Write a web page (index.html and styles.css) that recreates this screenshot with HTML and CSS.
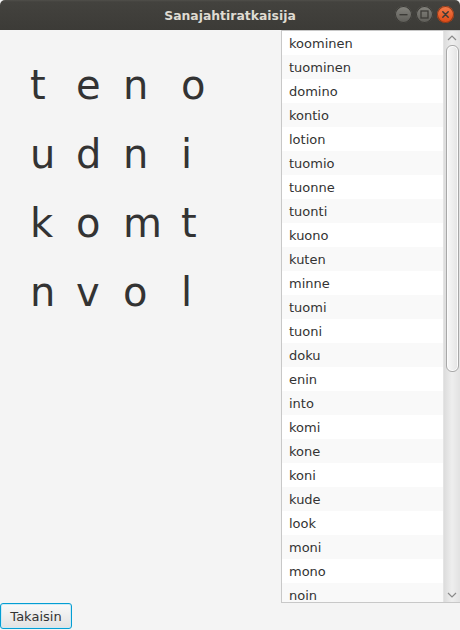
FILE: index.html
```html
<!DOCTYPE html>
<html lang="fi">
<head>
<meta charset="utf-8">
<title>Sanajahtiratkaisija</title>
<link rel="stylesheet" href="styles.css">
</head>
<body>
<div class="window">
  <header class="titlebar">
    <span class="title">Sanajahtiratkaisija</span>
    <div class="controls">
      <span class="ctl ctl-min"><svg width="17" height="17" viewBox="0 0 17 17"><rect x="4.5" y="8" width="8" height="1.4" fill="#3c3b37"/></svg></span>
      <span class="ctl ctl-max"><svg width="17" height="17" viewBox="0 0 17 17"><rect x="5" y="5" width="7" height="7" fill="none" stroke="#3c3b37" stroke-width="1.3"/></svg></span>
      <span class="ctl ctl-close"><svg width="17" height="17" viewBox="0 0 17 17"><path d="M5.8 5.8 L11.2 11.2 M11.2 5.8 L5.8 11.2" stroke="#3c3b37" stroke-width="1.5" stroke-linecap="round"/></svg></span>
    </div>
  </header>
  <main class="content">
    <section class="board">
      <span class="cell">t</span><span class="cell">e</span><span class="cell">n</span><span class="cell">o</span>
      <span class="cell">u</span><span class="cell">d</span><span class="cell">n</span><span class="cell">i</span>
      <span class="cell">k</span><span class="cell">o</span><span class="cell">m</span><span class="cell">t</span>
      <span class="cell">n</span><span class="cell">v</span><span class="cell">o</span><span class="cell">l</span>
    </section>
    <section class="listview">
      <ul class="items">
        <li>koominen</li><li>tuominen</li><li>domino</li><li>kontio</li>
        <li>lotion</li><li>tuomio</li><li>tuonne</li><li>tuonti</li>
        <li>kuono</li><li>kuten</li><li>minne</li><li>tuomi</li>
        <li>tuoni</li><li>doku</li><li>enin</li><li>into</li>
        <li>komi</li><li>kone</li><li>koni</li><li>kude</li>
        <li>look</li><li>moni</li><li>mono</li><li>noin</li>
      </ul>
      <div class="scrollbar">
        <div class="arrow"><svg width="10" height="6" viewBox="0 0 10 6"><path d="M1 5 L5 1 L9 5" fill="none" stroke="#8a8a8a" stroke-width="1.2"/></svg></div>
        <div class="track"><div class="thumb"></div></div>
        <div class="arrow"><svg width="10" height="6" viewBox="0 0 10 6"><path d="M1 1 L5 5 L9 1" fill="none" stroke="#8a8a8a" stroke-width="1.2"/></svg></div>
      </div>
    </section>
  </main>
  <footer class="bottom">
    <button class="btn" type="button">Takaisin</button>
  </footer>
</div>
</body>
</html>
```

FILE: styles.css
```css
html, body {
  margin: 0;
  padding: 0;
  background: #f4f4f4;
}
.window {
  width: 460px;
  height: 630px;
  display: flex;
  flex-direction: column;
  background: #f4f4f4;
  font-family: "DejaVu Sans", Verdana, sans-serif;
  color: #333333;
  overflow: hidden;
}
.titlebar {
  height: 30px;
  flex: none;
  display: flex;
  align-items: center;
  justify-content: center;
  position: relative;
  background: linear-gradient(#504f4a 0px, #43423e 2px, #3c3b37 100%);
  border-radius: 5px 5px 0 0;
}
.title {
  color: #dfdbd2;
  font-weight: bold;
  font-size: 12.4px;
}
.controls {
  position: absolute;
  right: 6px;
  top: 6px;
  display: flex;
  gap: 4px;
}
.ctl {
  width: 17px;
  height: 17px;
  border-radius: 50%;
  display: block;
  box-sizing: border-box;
  background: linear-gradient(#85847e, #5d5c57);
  box-shadow: inset 0 0 0 1px #3a3935;
}
.ctl svg { display: block; }
.ctl-close {
  background: linear-gradient(#f37c4b, #dd4814);
  box-shadow: inset 0 0 0 1px #8c3a1a;
}
.content {
  flex: 1;
  display: flex;
  min-height: 0;
}
.board {
  flex: 1;
  display: grid;
  grid-template-columns: 46px 47px 58px 30px;
  grid-auto-rows: 46px;
  row-gap: 23px;
  align-content: start;
  padding: 32px 0 0 30px;
  font-size: 40px;
  line-height: 46px;
  color: #333333;
}
.cell { display: block; }
.listview {
  width: 179px;
  flex: none;
  box-sizing: border-box;
  border: 1px solid #c8c8c8;
  border-right: none;
  display: flex;
  background: #ffffff;
}
.items {
  list-style: none;
  margin: 0;
  padding: 0;
  flex: 1;
  overflow: hidden;
  font-size: 13px;
}
.items li {
  height: 24px;
  line-height: 26px;
  padding-left: 7px;
  background: #ffffff;
}
.items li:nth-child(even) { background: #f9f9f9; }
.scrollbar {
  width: 16px;
  flex: none;
  display: flex;
  flex-direction: column;
  background: linear-gradient(to right, #dcdcdc, #eeeeee 50%, #e2e2e2);
  border-left: 1px solid #e4e4e4;
}
.arrow {
  height: 14px;
  display: flex;
  align-items: center;
  justify-content: center;
  flex: none;
}
.track {
  flex: 1;
  padding: 0 1px 0 2px;
}
.thumb {
  height: 327px;
  border: 1px solid #a8a8a8;
  border-radius: 6px;
  background: linear-gradient(to right, #f8f8f8, #e4e4e4);
  box-shadow: inset 0 0 0 1px #fcfcfc;
  box-sizing: border-box;
}
.bottom {
  height: 27px;
  flex: none;
}
.btn {
  width: 72px;
  height: 26px;
  margin: 0;
  padding: 0;
  font-family: "DejaVu Sans", Verdana, sans-serif;
  font-size: 13px;
  color: #333333;
  border: 1px solid #039ed3;
  border-radius: 3px;
  background: linear-gradient(#f9f9f9, #e2e2e2);
  box-shadow: inset 0 0 0 1px #cde9f5;
  text-align: center;
}
```
